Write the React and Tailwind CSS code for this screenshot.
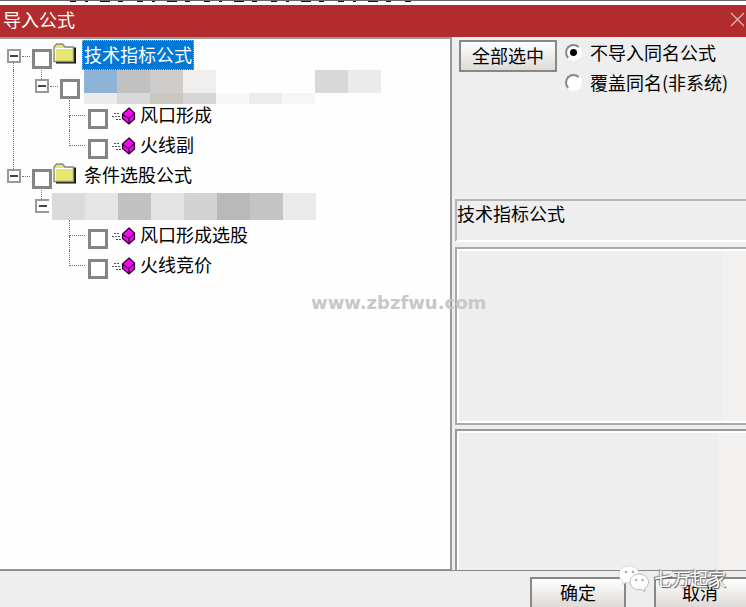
import React, { useState } from "react";

const labelMosaic = [
  ["bg-[#8db3d6]", "bg-[#c1c1c1]", "bg-[#cfcdcb]", "bg-[#f0efed]", "", "", "", "bg-[#d8d8d8]", "bg-[#eaeceb]"],
  ["bg-[#ebebeb]", "bg-[#d8d9dc]", "bg-[#cac6c0]", "bg-[#d6d6d6]", "bg-[#f7f7f7]", "bg-[#ebedec]", "bg-[#f5f6f5]"],
];
const rowMosaic = [
  "bg-[#dbdbdb]", "bg-[#e7e5e3]", "bg-[#c1c1bf]", "bg-[#e2e4e3]",
  "bg-[#d3d3d3]", "bg-[#b9b9b9]", "bg-[#c4c4c2]", "bg-[#eaeaea]",
];

const rows = [
  { name: "技术指标公式", guides: ["first"], icon: "folder", selected: true },
  { guides: ["line", "open"], mosaic: "label" },
  { name: "风口形成", guides: ["line", "blank", "tee"], icon: "formula" },
  { name: "火线副", guides: ["line", "blank", "elbow"], icon: "formula" },
  { name: "条件选股公式", guides: ["open"], icon: "folder" },
  { guides: ["blank", "cut"], mosaic: "row" },
  { name: "风口形成选股", guides: ["blank", "blank", "tee"], icon: "formula" },
  { name: "火线竞价", guides: ["blank", "blank", "elbow"], icon: "formula" },
];

function FolderIcon() {
  return (
    <svg width="24" height="22" viewBox="0 0 24 22" className="shrink-0">
      <defs>
        <pattern id="dither" width="2" height="2" patternUnits="userSpaceOnUse">
          <rect width="2" height="2" fill="#f2f224" />
          <rect width="1" height="1" fill="#e4e470" />
          <rect x="1" y="1" width="1" height="1" fill="#e4e470" />
        </pattern>
      </defs>
      <path d="M3 19.500H22V4.500" fill="none" stroke="#111" strokeWidth="2" />
      <path d="M1 18.500V4L3.500 1H9.500L12 4H20.500V18.500Z" fill="url(#dither)" stroke="#8a8a8a" strokeWidth="1.4" />
      <path d="M2.500 17.500V5.500H19.500" fill="none" stroke="#fff" />
    </svg>
  );
}

function FormulaIcon() {
  return (
    <svg width="24" height="18" viewBox="0 0 24 18" className="shrink-0">
      <path d="M2 6.500H8M0 9.500H9M4 12.500H10" stroke="#555" strokeWidth="1.2" strokeDasharray="2 1" />
      <path d="M17 1L22.500 6V12L17 17L10.500 11.500V7Z" fill="#f0f" stroke="#200020" strokeWidth="1.2" />
      <path d="M10.500 7.500L17 11.500L22.500 6.500M17 11.500V17" fill="none" stroke="#200020" strokeWidth="1.2" />
    </svg>
  );
}

function Expander({ first, cut }) {
  return (
    <div className="flex h-[30px] w-7 flex-col">
      <div className={`ml-[13px] h-[9px] border-dotted border-[#777] ${first ? "" : "border-l"}`} />
      <div className="flex items-center">
        <button
          aria-label="折叠"
          className={`ml-[7px] flex h-[14px] w-[14px] shrink-0 items-center justify-center border-2 border-[#999] bg-white ${
            cut ? "border-r-0" : ""
          }`}
        >
          <span className="h-[2px] w-2 bg-[#444]" />
        </button>
        {!cut && <div className="ml-[1px] w-2 shrink-0 border-t border-dotted border-[#777]" />}
      </div>
      {first && <div className="ml-[13px] flex-1 border-l border-dotted border-[#777]" />}
    </div>
  );
}

function Guide({ type }) {
  if (type === "blank") return <div className="w-7" />;
  if (type === "line") {
    return (
      <div className="w-7 pl-[13px]">
        <div className="h-full border-l border-dotted border-[#777]" />
      </div>
    );
  }
  if (type === "tee" || type === "elbow") {
    return (
      <div className="w-7 pl-[13px]">
        <div className="h-4 w-4 border-b border-l border-dotted border-[#777]" />
        {type === "tee" && <div className="h-[14px] border-l border-dotted border-[#777]" />}
      </div>
    );
  }
  return <Expander first={type === "first"} cut={type === "cut"} />;
}

function Mosaic({ colors, className }) {
  return (
    <div className={`flex ${className}`}>
      {colors.map((color, i) => (
        <span key={i} className={`w-[33px] ${color}`} />
      ))}
    </div>
  );
}

function TreeRow({ row, index }) {
  const id = `formula-${index}`;
  return (
    <li className="flex h-[30px]">
      {row.guides.map((type, i) => (
        <Guide type={type} key={i} />
      ))}
      {row.mosaic === "row" ? (
        <Mosaic colors={rowMosaic} className="-ml-1 mt-[3px] h-[27px]" />
      ) : (
        <input
          type="checkbox"
          id={id}
          aria-label={row.name || "公式"}
          className="ml-1 mt-[9px] h-5 w-5 shrink-0 appearance-none border-3 border-[#858585] bg-white checked:bg-[#0078d7]"
        />
      )}
      {row.mosaic === "label" && (
        <div className="ml-1">
          <Mosaic colors={labelMosaic[0]} className="h-[23px]" />
          <Mosaic colors={labelMosaic[1]} className="h-[11px]" />
        </div>
      )}
      {row.icon === "folder" && (
        <div className="ml-[1px] mt-[3px]"><FolderIcon /></div>
      )}
      {row.icon === "formula" && (
        <div className="ml-1 mt-[7px]"><FormulaIcon /></div>
      )}
      {row.name && (
        <label
          htmlFor={id}
          className={`whitespace-nowrap border px-[1px] pb-[2px] leading-[26px] ${
            row.selected ? "border-dotted border-[#ff9a3c] bg-[#0078d7] text-white" : "border-transparent"
          } ${row.icon === "formula" ? "ml-[2px]" : "ml-[5px]"}`}
        >
          {row.name}
        </label>
      )}
    </li>
  );
}

function Radio({ label, checked, onChange }) {
  return (
    <label className="flex h-[30px] items-center gap-2 whitespace-nowrap">
      <input
        type="radio"
        name="mode"
        checked={checked}
        onChange={onChange}
        className="h-[17px] w-[17px] shrink-0 appearance-none rounded-full border-2 border-t-[#888] border-l-[#888] border-r-white border-b-white bg-white checked:bg-[radial-gradient(circle,#000_3px,#fff_4px)]"
      />
      {label}
    </label>
  );
}

function PushButton({ children, className }) {
  return (
    <button
      className={`h-8 shrink-0 border-2 border-[#888] bg-linear-to-b from-white to-[#dedbd6] pb-[2px] leading-[26px] ${className}`}
    >
      {children}
    </button>
  );
}

function WechatLogo() {
  return (
    <svg width="32" height="27" viewBox="0 0 32 27">
      <path d="M11 1C5 1 1 5 1 9.500C1 12.500 2.500 14.500 5 16L4 19.500L8 17.500C14 19 21 15.500 21 9.500C21 5 17 1 11 1Z" fill="#fff" stroke="#ccc" strokeWidth=".7" />
      <path d="M21 9C16 9 12 12.500 12 17C12 22 17 25.500 23 24.500L27 26.500L26.500 23.500C29 22 30.500 19.500 30.500 17C30.500 12.500 26 9 21 9Z" fill="#fff" stroke="#aaa" strokeWidth=".8" />
      <g fill="#aaa">
        <circle cx="8" cy="7" r="1.300" />
        <circle cx="15" cy="7" r="1.300" />
        <circle cx="18" cy="15" r="1.200" />
        <circle cx="24.500" cy="15" r="1.200" />
      </g>
    </svg>
  );
}

export default function App() {
  const [mode, setMode] = useState("skip");

  return (
    <div className="relative flex h-screen flex-col overflow-hidden bg-[#eeeeee] font-['Noto_Sans_CJK_SC',sans-serif] text-lg text-black">
      <div className="h-[5px] shrink-0 border-t border-[#666] bg-white">
        <svg width="350" height="1" className="ml-[70px] block">
          <path d="M0 .5H350" stroke="#111" strokeDasharray="6 9 3 12 10 8 5 14" />
        </svg>
      </div>
      <header className="flex h-8 shrink-0 justify-between bg-[#b22b2d] pl-[3px] text-white">
        <h1 className="leading-7">导入公式</h1>
        <button aria-label="关闭" className="pr-[1px] pb-1">
          <svg width="15" height="15" viewBox="0 0 15 15">
            <path d="M1 1L14 14M14 1L1 14" stroke="#e6b5b5" strokeWidth="1.200" />
          </svg>
        </button>
      </header>

      <main className="grid min-h-0 flex-1 grid-cols-[452fr_291fr] gap-[3px] border-b border-[#888]">
        <ul className="overflow-hidden border-t-2 border-r-2 border-b border-[#999] bg-[#fefefe] pt-[1px]">
          {rows.map((row, i) => (
            <TreeRow row={row} index={i} key={i} />
          ))}
        </ul>

        <section className="flex min-w-0 flex-col">
          <div className="flex h-[162px] shrink-0 gap-2 pl-1">
            <PushButton className="mt-[3px] w-[98px]">全部选中</PushButton>
            <div>
              <Radio label="不导入同名公式" checked={mode === "skip"} onChange={() => setMode("skip")} />
              <Radio label="覆盖同名(非系统)" checked={mode === "cover"} onChange={() => setMode("cover")} />
            </div>
          </div>
          <div className="h-[43px] shrink-0 border-t-2 border-l-2 border-b-2 border-t-[#b4b4b4] border-l-[#b4b4b4] border-b-white leading-6">
            技术指标公式
          </div>
          <textarea
            readOnly
            aria-label="公式说明"
            className="mt-[5px] min-h-0 flex-[178] resize-none border-y-2 border-l-2 border-[#aaa] bg-[linear-gradient(to_left,#f2f1ef_24px,#eeeeee_24px)] shadow-[inset_2px_2px_white,inset_0_-2px_white] outline-none"
          />
          <textarea
            readOnly
            aria-label="参数说明"
            className="mt-1 min-h-0 flex-[142] resize-none border-t-2 border-l-2 border-[#999] bg-[linear-gradient(to_left,#f2f1ef_28px,#eeeeee_28px)] shadow-[inset_2px_2px_white] outline-none"
          />
        </section>
      </main>

      <footer className="-mr-1 flex h-9 shrink-0 justify-end gap-7 pt-[6px]">
        <PushButton className="w-24">确定</PushButton>
        <PushButton className="w-24 pr-1">取消</PushButton>
      </footer>

      <p className="pointer-events-none absolute top-[291px] left-[311px] font-['DejaVu_Sans',sans-serif] text-lg leading-6 font-bold text-[#c8c8c8]">
        www.zbzfwu.com
      </p>
      <div className="pointer-events-none absolute right-5 bottom-[15px] flex items-center gap-1 leading-7 text-white [text-shadow:1px_1px_1px_#555,-1px_-1px_1px_#888]">
        <WechatLogo />
        七万起家
      </div>
    </div>
  );
}
